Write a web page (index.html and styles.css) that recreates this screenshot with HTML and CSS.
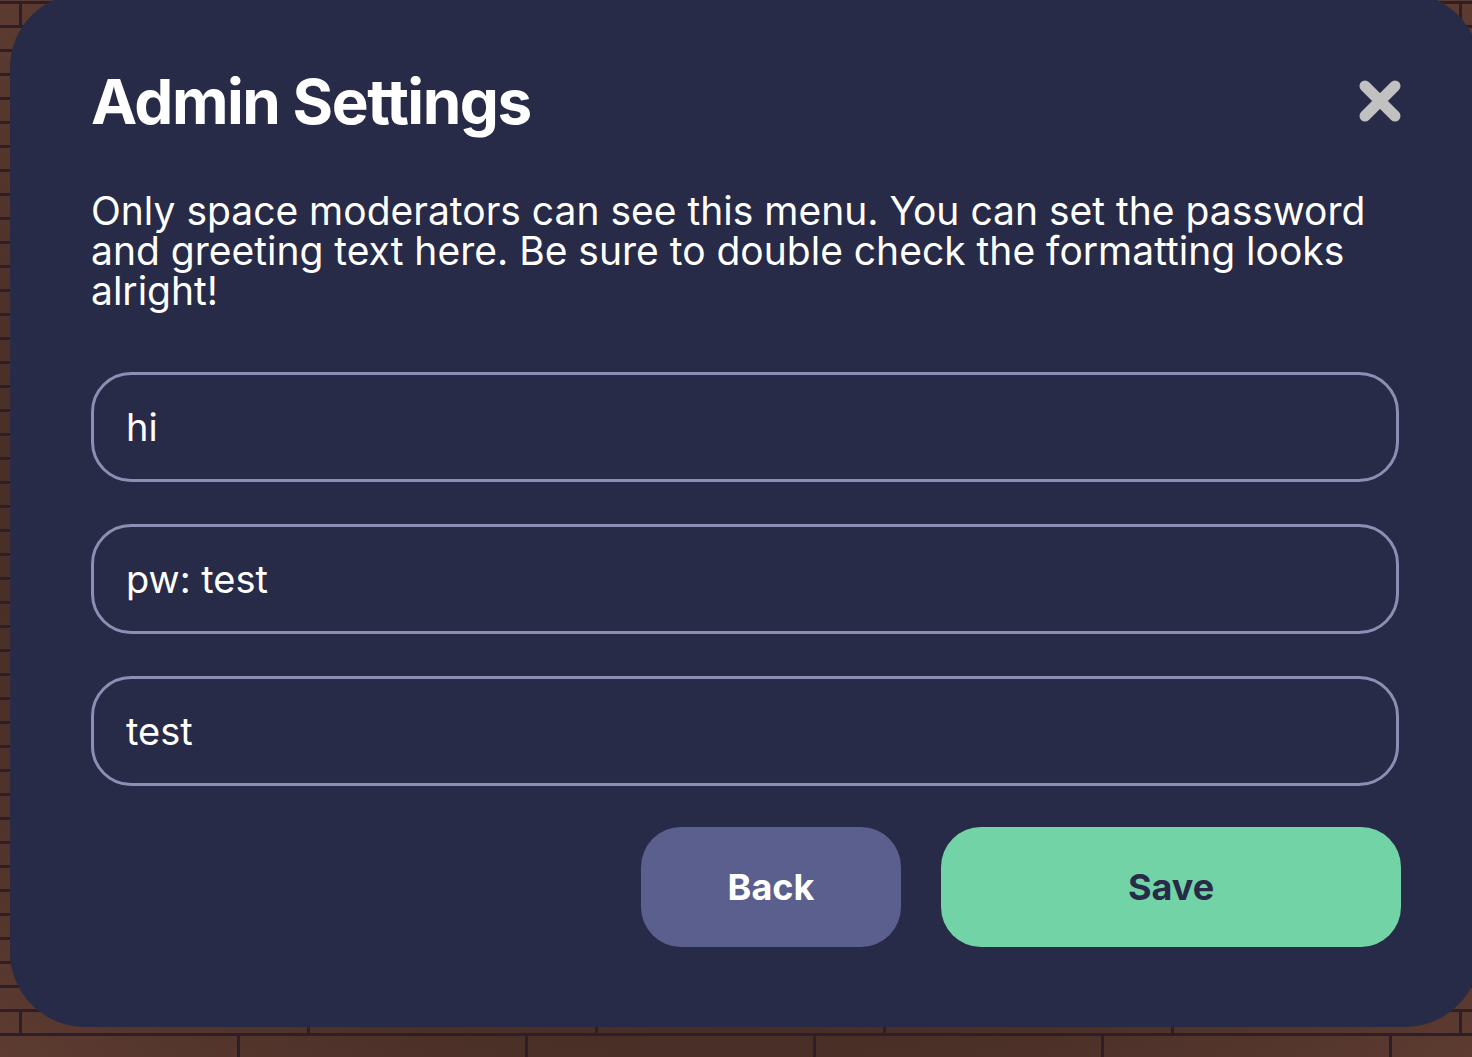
FILE: index.html
```html
<!DOCTYPE html>
<html>
	<head>
		<meta charset="utf-8">
		<title>Admin Settings</title>
		<link rel="stylesheet" href="styles.css">
	</head>
	<body>
		<div class="modal">
			<div class="modal-head">
				<h2>Admin Settings</h2>
				<button class="close" aria-label="Close">
					<svg width="42" height="42" viewBox="0 0 42 42">
						<path d="M6 6L36 36M36 6L6 36" stroke="#c1c1c1" stroke-width="11" stroke-linecap="round" fill="none"/>
					</svg>
				</button>
			</div>
			<p class="intro">Only space moderators can see this menu. You can set the password<br>and greeting text here. Be sure to double check the formatting looks<br>alright!</p>
			<div class="fields">
				<input class="field" type="text" value="hi">
				<input class="field" type="text" value="pw: test">
				<input class="field" type="text" value="test">
			</div>
			<div class="actions">
				<button class="btn btn-back">Back</button>
				<button class="btn btn-save">Save</button>
			</div>
		</div>
	</body>
</html>
```
FILE: styles.css
```css
* {
	margin: 0;
	padding: 0;
	box-sizing: border-box;
}

html, body {
	height: 100%;
}

body {
	overflow: hidden;
	padding-left: 10px;
	font-family: Inter, "Noto Sans", sans-serif;
	background-color: #3d2720;
	background-image:
		conic-gradient(from 270deg at 3px 24px, #2c1f2a 90deg, transparent 90deg),
		conic-gradient(from 270deg at 3px 24px, #2c1f2a 90deg, transparent 90deg),
		repeating-linear-gradient(to bottom, #2c1f2a 0 3px, transparent 3px 24px),
		radial-gradient(ellipse at 50% 50%, #36231d 40%, #5d3b31 100%);
	background-size: 288px 48px, 288px 48px, 100% 24px, 100% 100%;
	background-position: 19px 2px, 237px 26px, 0 1px, 0 0;
	background-repeat: repeat, repeat, repeat, no-repeat;
}

.modal {
	width: 1470px;
	height: 1034px;
	margin-top: -7px;
	padding: 71px 81px 0 81px;
	background-color: #282b47;
	border-radius: 75px;
	color: white;
}

.modal-head {
	display: flex;
	justify-content: space-between;
	align-items: center;
	height: 76px;
}

.modal-head h2 {
	font-size: 62px;
	font-weight: 700;
	letter-spacing: -1.5px;
	line-height: 76px;
}

.close {
	border: none;
	background: none;
	width: 42px;
	height: 42px;
	margin-top: -2px;
	margin-right: -2px;
	cursor: pointer;
}

.close svg {
	display: block;
}

.intro {
	margin-top: 51px;
	font-size: 39px;
	line-height: 40px;
}

.fields {
	display: flex;
	flex-direction: column;
	gap: 42px;
	margin-top: 61px;
	width: 1308px;
}

.field {
	height: 110px;
	border: 3px solid #8b8fb3;
	border-radius: 40px;
	background: transparent;
	padding-left: 32px;
	color: white;
	font-family: Inter, "Noto Sans", sans-serif;
	font-size: 38px;
	outline: none;
}

.actions {
	display: flex;
	justify-content: flex-end;
	gap: 40px;
	margin-top: 41px;
	width: 1310px;
}

.btn {
	height: 120px;
	border: none;
	border-radius: 40px;
	font-family: Inter, "Noto Sans", sans-serif;
	font-size: 36px;
	font-weight: 700;
	cursor: pointer;
}

.btn-back {
	width: 260px;
	background-color: #5a5f8d;
	color: white;
}

.btn-save {
	width: 460px;
	background-color: #72d3a6;
	color: #282b47;
}
```
